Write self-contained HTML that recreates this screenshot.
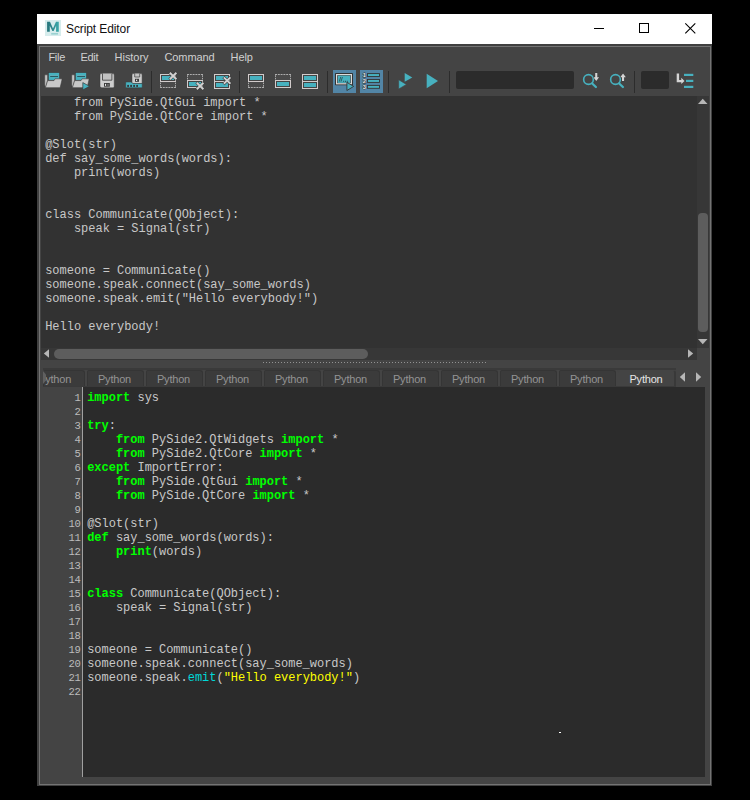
<!DOCTYPE html>
<html><head><meta charset="utf-8"><title>Script Editor</title>
<style>
*{margin:0;padding:0;box-sizing:border-box}
html,body{width:750px;height:800px;background:#000;overflow:hidden}
body{position:relative;font-family:"Liberation Sans",sans-serif;font-size:11px;color:#c8c8c8}
.abs{position:absolute}
#titlebar{left:37px;top:14px;width:675px;height:30px;background:#fff}
#title{left:29px;top:8px;font-size:12px;color:#111;white-space:nowrap;letter-spacing:-0.1px}
#client{left:37px;top:44px;width:675px;height:742px;background:#404040}
#frame{left:2px;top:2px;width:672px;height:739px;border:1px solid #737373;background:#444}
.menu span{position:absolute;top:51px;white-space:nowrap;font-size:11px;color:#d0d0d0;letter-spacing:-0.25px}
.sep{position:absolute;top:71px;width:1px;height:22px;background:#2c2c2c}
.hl{position:absolute;top:70px;height:23px;background:#5285a6}
.field{position:absolute;top:71px;height:18px;background:#2b2b2b;border-radius:2px}
svg{position:absolute;overflow:visible}
pre{font-family:"Liberation Mono",monospace;font-size:12px;letter-spacing:-0.02px;line-height:14px;color:#c8c8c8;position:absolute;white-space:pre}
#top{left:41px;top:96px;width:656px;height:252px;background:#323232;overflow:hidden}
#bot{left:83px;top:387px;width:622px;height:390px;background:#2b2b2b;overflow:hidden}
.k{color:#00ff00;font-weight:bold}
.c{color:#00d8d8}
.s{color:#ffff00}
#nums{left:41.400px;top:391px;width:39px;text-align:right;font-family:"Liberation Mono",monospace;font-size:10.500px;letter-spacing:-0.3px;line-height:14px;color:#bcbcbc}
.tab{position:absolute;top:370px;height:16px;width:57px;background:#3b3b3b;border:1px solid #353535;border-bottom:none;border-radius:2px 3px 0 0;color:#949494;font-size:11px;text-align:center;line-height:14px;padding:1px 2px 0 0;letter-spacing:-0.2px;white-space:nowrap}
.tab.sel{background:#444;border-color:#444;border-right:2px solid #393939;color:#e6e6e6;width:59px;border-radius:3px 3px 0 0;padding-right:0}
</style></head><body>
<div id="titlebar" class="abs">
  <svg style="left:8px;top:6px" width="16" height="16" viewBox="0 0 16 16"><defs><linearGradient id="mg" x1="0" x2="1" y1="0" y2="0"><stop offset="0" stop-color="#176a70"/><stop offset=".5" stop-color="#1f8288"/><stop offset="1" stop-color="#2fa5a5"/></linearGradient></defs><rect width="16" height="16" fill="#d6ecec"/><path d="M2.100 11.700V1.800h2.900L8 8.600l3-6.800h2.800v9.900h-2.700V5.800L8.600 11H7.400L4.800 5.800v5.900z" fill="url(#mg)" opacity=".92"/><rect x="6.200" y="13.200" width="6.800" height="1.300" fill="#8ccaca"/></svg>
  <div id="title" class="abs">Script Editor</div>
  <svg style="left:557px;top:14px" width="10" height="1"><rect width="10" height="1" fill="#000"/></svg>
  <svg style="left:602px;top:9px" width="10" height="10"><rect x=".5" y=".5" width="9" height="9" fill="none" stroke="#000"/></svg>
  <svg style="left:648px;top:9px" width="11" height="11"><path d="M.3.300l10 10M10.300.300l-10 10" stroke="#000" stroke-width="1.100"/></svg>
</div>
<div id="client" class="abs"><div id="frame" class="abs"></div></div>
<div class="menu"><span style="left:48.400px">File</span><span style="left:80.400px">Edit</span><span style="left:114.600px;letter-spacing:-0.05px">History</span><span style="left:164.400px;letter-spacing:-0.08px">Command</span><span style="left:230.600px;letter-spacing:-0.1px">Help</span></div>
<!--TOOLBAR-->
<div class="sep" style="left:151px"></div><div class="sep" style="left:239px"></div><div class="sep" style="left:327px"></div><div class="sep" style="left:388px"></div><div class="sep" style="left:449px"></div><div class="sep" style="left:634px"></div>
<div class="hl" style="left:333px;width:23px"></div><div class="hl" style="left:360px;width:23px"></div>
<div class="field" style="left:456px;width:118px"></div><div class="field" style="left:641px;width:28px"></div>
<svg id="tb" style="left:0;top:0" width="750" height="100" viewBox="0 0 750 100">
<defs>
<g id="fold"><path d="M.7 2.800H3.600V8.600L1.800 15.600Q.7 14 .7 12z" fill="#c2c2c2" stroke="#3a3a3a" stroke-width=".5"/><rect x="4.500" y=".7" width="10.900" height="7.500" fill="#47b1bf" stroke="#3a3a3a" stroke-width=".5"/><rect x="6.200" y="3" width="7.800" height=".8" fill="#7cc8d2"/><rect x="6.200" y="3.800" width="7.800" height="1.200" fill="#2a5860"/><path d="M3.600 8.600H10L11 6.800H17.300Q18.200 6.800 18 7.800L16.300 15Q16.200 15.700 15.500 15.700H2Q1.400 15.700 1.600 15z" fill="#c8c8c8" stroke="#3a3a3a" stroke-width=".6"/></g>
<g id="solid"><rect x=".5" y=".5" width="15" height="7" fill="#444" stroke="#d2cccc"/><rect x="2" y="2" width="12" height="4" fill="#47b1bf"/></g>
<g id="dashB" stroke="#adadad" fill="none"><rect x="1" y="0" width="14" height="5" fill="#4a4a4a" stroke="none"/><path d="M0 5.500h16" stroke-dasharray="2 .8"/><path d="M.5.600v5.400M15.500.600v5.400" stroke-dasharray="1.600 .9"/></g>
<g id="dashT" stroke="#adadad" fill="none"><rect x="1" y="1" width="14" height="5" fill="#4a4a4a" stroke="none"/><path d="M0 .5h16" stroke-dasharray="2 .8"/><path d="M.5 5.400v-5.400M15.500 5.400v-5.400" stroke-dasharray="1.600 .9"/></g>
<g id="xm"><path d="M.5.500l7.200 7M7.700.500L.5 7.500" stroke="#3a3a3a" stroke-width="3.100"/><path d="M.8.800l6.600 6.400M7.400.800L.8 7.200" stroke="#d2d2d2" stroke-width="1.900"/></g>
</defs>
<!-- 1 open -->
<use href="#fold" x="44" y="72"/>
<!-- 2 source -->
<use href="#fold" x="71" y="72"/><path d="M82.800 82.600l6.700 3.700-6.700 3.700z" fill="#47b1bf" stroke="#3a3a3a" stroke-width=".7"/>
<!-- 3 save -->
<path d="M101.200 73.600h11.800a1.200 1.200 0 0 1 1.200 1.200v11.800a1.200 1.200 0 0 1-1.200 1.200h-11.600l-1.400-1.400v-11.600a1.200 1.200 0 0 1 1.200-1.200z" fill="#cdcdcd" stroke="#3a3a3a" stroke-width=".5"/><path d="M102.500 73.600v6.600h9.400v-6.600" fill="#c1c1c1" stroke="#3a3a3a" stroke-width=".8"/><rect x="104" y="83" width="5.800" height="3.700" fill="#3a3a3a"/><rect x="105" y="83.900" width="1.100" height="2" fill="#e4e4e4"/><rect x="107" y="83.900" width="2" height="2" fill="#666"/>
<!-- 4 save to shelf -->
<path d="M133.200 73.600h7.700a1.200 1.200 0 0 1 1.200 1.200v8.700h-10.100v-8.700a1.200 1.200 0 0 1 1.200-1.200z" fill="#cdcdcd" stroke="#3a3a3a" stroke-width=".5"/><path d="M134.700 73.600v3.400h5v-3.400" fill="#c1c1c1" stroke="#3a3a3a" stroke-width=".7"/><rect x="135" y="78.800" width="4" height="3" fill="#3a3a3a"/><rect x="136" y="79.700" width="1.200" height="1.300" fill="#e4e4e4"/>
<path d="M125.700 82h5.300l2 1.500h9.200v4.300h-16.500z" fill="#47b1bf" stroke="#3a3a3a" stroke-width=".5"/><g fill="#33383a"><rect x="127.200" y="84.900" width="1.800" height="2"/><rect x="130.200" y="84.900" width="1.800" height="2"/><rect x="133.200" y="84.900" width="1.800" height="2"/><rect x="136.200" y="84.900" width="1.800" height="2"/></g>
<!-- 5 clear history -->
<use href="#solid" x="160" y="74"/><use href="#dashB" x="160" y="82"/><use href="#xm" x="169" y="72"/>
<!-- 6 clear input -->
<use href="#dashT" x="187" y="74"/><use href="#solid" x="187" y="80"/><use href="#xm" x="196" y="82"/>
<!-- 7 clear all -->
<use href="#solid" x="214" y="74"/><use href="#solid" x="214" y="81"/><use href="#xm" x="223" y="76.600"/>
<!-- 8,9,10 -->
<use href="#solid" x="248" y="74"/><use href="#dashB" x="248" y="82"/>
<use href="#dashT" x="275" y="74"/><use href="#solid" x="275" y="80"/>
<use href="#solid" x="302" y="74"/><use href="#solid" x="302" y="81"/>
<!-- 11 echo -->
<rect x="335" y="73" width="18" height="12.300" rx=".8" fill="#333"/><rect x="336.600" y="74.600" width="14.800" height="9.200" fill="#333" stroke="#dcdcdc" stroke-width="1.200"/><rect x="337.800" y="75.600" width="12.500" height="7.300" fill="#47b1bf"/>
<path d="M340.700 77l-1.400 4.600M342.400 77l-1.400 4.600" stroke="#25474d" stroke-width=".8"/><path d="M343.200 81.300h1M345 81.300h1M346.800 81.300h1" stroke="#25474d" stroke-width="1"/>
<path d="M346.900 82.300l6.800 4.100-6.800 4.100z" fill="#47b1bf" stroke="#333" stroke-width=".9"/>
<!-- 12 line numbers -->
<g fill="#47b1bf" stroke="#333" stroke-width=".9"><rect x="367.500" y="73.600" width="12" height="2.900"/><rect x="367.500" y="79.500" width="12" height="2.900"/><rect x="367.500" y="85.400" width="12" height="2.900"/></g>
<g font-family="Liberation Sans,sans-serif" font-size="5.800" font-weight="bold" fill="#ececec" stroke="#333" stroke-width=".9" paint-order="stroke"><text x="362.800" y="77.200">1</text><text x="362.800" y="83.100">2</text><text x="362.800" y="89">3</text></g>
<!-- 13, 14 execute -->
<path d="M404.700 73l7.600 4.400-7.600 4.400z" fill="#47b1bf"/><path d="M398.700 79.800l7.700 4.600-7.700 4.600z" fill="#47b1bf" stroke="#444" stroke-width=".6"/>
<path d="M426.700 73.700L438 81l-11.300 7.200z" fill="#47b1bf"/>
<!-- search down/up -->
<g fill="none" stroke="#47b1bf"><circle cx="588.500" cy="79.500" r="4.850" stroke-width="1.600"/><path d="M592.200 83.500l3.700 3.500" stroke-width="2.300" stroke-linecap="round"/><circle cx="615.500" cy="79.500" r="4.850" stroke-width="1.600"/><path d="M619.200 83.500l3.700 3.500" stroke-width="2.300" stroke-linecap="round"/></g>
<path d="M595.200 72.900h2.100v4.300h1.800l-2.850 3.800-2.850-3.800h1.800z" fill="#d4d4d4" stroke="#3c3c3c" stroke-width=".7" paint-order="stroke"/>
<path d="M622 81h2.100v-3.800h1.800l-2.850-3.800-2.850 3.800h1.800z" fill="#d4d4d4" stroke="#3c3c3c" stroke-width=".7" paint-order="stroke"/>
<!-- goto line -->
<path d="M676.700 73.400h2.400v6.600h2.200v-2.200l3.200 3.100-3.200 3.100v-1.800h-4.600z" fill="#d4d4d4"/>
<g fill="#47b1bf"><rect x="684" y="73.800" width="9.300" height="2.200"/><rect x="686" y="79.800" width="7.300" height="2.200"/><rect x="684" y="85.800" width="9.300" height="2.200"/></g>
</svg>
<!--/TOOLBAR-->
<div id="top" class="abs"><pre style="left:4.200px;top:0px">    from PySide.QtGui import *
    from PySide.QtCore import *

@Slot(str)
def say_some_words(words):
    print(words)


class Communicate(QObject):
    speak = Signal(str)


someone = Communicate()
someone.speak.connect(say_some_words)
someone.speak.emit("Hello everybody!")

Hello everybody!</pre></div>
<!--SCROLL-->
<div class="abs" style="left:697px;top:96px;width:12px;height:252px;background:#373737"></div>
<div class="abs" style="left:698px;top:213px;width:10px;height:119px;background:#5d5d5d;border-radius:4px"></div>
<div class="abs" style="left:41px;top:348px;width:656px;height:12px;background:#373737"></div>
<div class="abs" style="left:54px;top:349px;width:314px;height:10px;background:#5d5d5d;border-radius:5px"></div>
<svg style="left:0;top:0" width="750" height="400" viewBox="0 0 750 400"><g fill="#b6b6b6"><path d="M698 104l4.750-5.200 4.750 5.200z"/><path d="M698 339l4.750 5.200 4.750-5.200z"/><path d="M49 349.200v8.600l-5.200-4.300z"/><path d="M688 349.200v8.600l5.200-4.300z"/><path d="M685 372.200v9.600l-5.200-4.800z"/><path d="M696 372.200v9.600l5.200-4.800z"/></g>
<path d="M263 362.500H486" stroke="#929292" stroke-width="1" stroke-dasharray="1 2"/></svg>
<!--/SCROLL-->
<!--TABS-->
<div class="abs" style="left:43px;top:368px;width:633px;height:2px;background:#3a3a3a"></div>
<div class="abs" style="left:43px;top:386px;width:633px;height:1px;background:#3a3a3a"></div>
<div class="tab" style="left:43px;width:42px;text-align:left;padding-left:1px;overflow:hidden"><span style="margin-left:-7px">Python</span></div>
<div class="tab" style="left:87px">Python</div><div class="tab" style="left:146px">Python</div><div class="tab" style="left:205px">Python</div><div class="tab" style="left:264px">Python</div><div class="tab" style="left:323px">Python</div><div class="tab" style="left:382px">Python</div><div class="tab" style="left:441px">Python</div><div class="tab" style="left:500px">Python</div><div class="tab" style="left:559px">Python</div>
<div class="tab sel" style="left:617px">Python</div>
<svg style="left:43px;top:371px" width="4" height="13"><path d="M0 0l3 3.500v6L0 13z" fill="#606060"/></svg>
<!--/TABS-->
<div id="nums" class="abs">1<br>2<br>3<br>4<br>5<br>6<br>7<br>8<br>9<br>10<br>11<br>12<br>13<br>14<br>15<br>16<br>17<br>18<br>19<br>20<br>21<br>22</div>
<div class="abs" style="left:82px;top:387px;width:1px;height:390px;background:#a0a0a0"></div>
<div id="bot" class="abs"><pre style="left:4.200px;top:4px"><span class="k">import</span> sys

<span class="k">try</span>:
    <span class="k">from</span> PySide2.QtWidgets <span class="k">import</span> *
    <span class="k">from</span> PySide2.QtCore <span class="k">import</span> *
<span class="k">except</span> ImportError:
    <span class="k">from</span> PySide.QtGui <span class="k">import</span> *
    <span class="k">from</span> PySide.QtCore <span class="k">import</span> *

@Slot(str)
<span class="k">def</span> say_some_words(words):
    <span class="k">print</span>(words)


<span class="k">class</span> Communicate(QObject):
    speak = Signal(str)


someone = Communicate()
someone.speak.connect(say_some_words)
someone.speak.<span class="c">emit</span>(<span class="s">"Hello everybody!"</span>)
</pre></div>
<div class="abs" style="left:559px;top:732px;width:2px;height:1px;background:#fff"></div>
</body></html>
